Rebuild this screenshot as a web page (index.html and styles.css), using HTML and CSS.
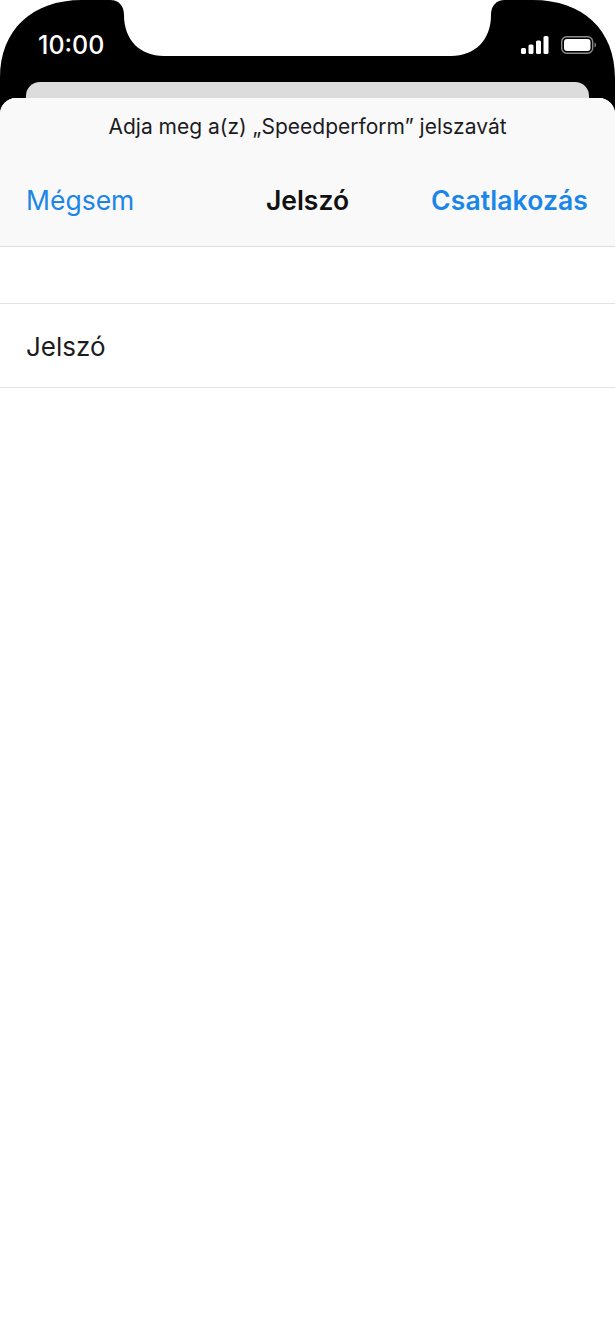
FILE: index.html
```html
<!DOCTYPE html>
<html lang="hu">
  <head>
    <meta charset="UTF-8" />
    <meta name="viewport" content="width=device-width, initial-scale=1.0" />
    <link rel="stylesheet" href="styles.css">
    <title>Jelszó</title>
  </head>
  <body>
    <div class="top">
      <svg class="bezel" width="615" height="112" viewBox="0 0 615 112">
        <path d="M0 112V78C0 30 32 0 82 0H110C119 0 124 6 124 15C124 40 140 56 164 56H451C475 56 491 40 491 15C491 6 496 0 505 0H533C583 0 615 30 615 78V112Z" fill="#000" />
      </svg>
      <div class="status">
        <span class="time">10:00</span>
        <div class="status-icons">
          <svg width="28" height="18" viewBox="0 0 28 18">
            <rect x="0" y="12" width="5" height="6" rx="1.5" fill="#fff" />
            <rect x="7.5" y="8.5" width="5" height="9.5" rx="1.5" fill="#fff" />
            <rect x="15" y="4.5" width="5" height="13.500" rx="1.500" fill="#fff" />
            <rect x="22.500" y="0" width="5" height="18" rx="1.500" fill="#fff" />
          </svg>
          <svg width="35" height="18" viewBox="0 0 35 18">
            <rect x="0.700" y="0.700" width="31" height="16.600" rx="5" fill="none" stroke="#8b8b8b" stroke-width="1.400" />
            <rect x="3" y="3" width="26.500" height="12" rx="3" fill="#fff" />
            <path d="M33.500 6.500C34.500 7 35 8 35 9C35 10 34.500 11 33.500 11.500Z" fill="#8b8b8b" />
          </svg>
        </div>
      </div>
      <div class="peek"></div>
    </div>

    <div class="sheet">
      <header class="sheet-head">
        <p class="prompt">Adja meg a(z) „Speedperform” jelszavát</p>
        <div class="nav">
          <span class="nav-btn">Mégsem</span>
          <span class="nav-title">Jelszó</span>
          <span class="nav-btn nav-btn-bold">Csatlakozás</span>
        </div>
      </header>
      <div class="spacer-row"></div>
      <div class="field-row">Jelszó</div>
    </div>
  </body>
</html>
```

FILE: styles.css
```css
* {
  box-sizing: border-box;
}
body {
  margin: 0;
  height: 1332px;
  overflow: hidden;
  background-color: #fff;
  font-family: Inter, "Liberation Sans", sans-serif;
  color: #1c1c1e;
}

/* black bezel + status bar */
.top {
  position: relative;
  height: 112px;
  overflow: hidden;
}
.bezel {
  position: absolute;
  left: 0;
  top: 0;
}
.status {
  position: relative;
  height: 82px;
  padding: 0 19px 0 38px;
  display: flex;
  justify-content: space-between;
  align-items: flex-start;
}
.time {
  margin-top: 30px;
  font-size: 25px;
  line-height: 30px;
  font-weight: 500;
  color: #fff;
}
.status-icons {
  margin-top: 36px;
  display: flex;
  align-items: center;
  gap: 12px;
}
.peek {
  position: relative;
  height: 40px;
  margin: 0 26px;
  border-radius: 14px 14px 0 0;
  background-color: #dcdcdc;
}

/* the sheet */
.sheet {
  position: relative;
  margin-top: -14px;
  border-radius: 16px 16px 0 0;
  overflow: hidden;
  background-color: #fff;
}
.sheet-head {
  height: 149px;
  background-color: #f9f9fa;
  border-bottom: 1px solid #dedede;
}
.prompt {
  margin: 0;
  padding-top: 17px;
  font-size: 21px;
  line-height: 24px;
  text-align: center;
}
.nav {
  margin-top: 45px;
  padding: 0 27px 0 26px;
  display: flex;
  justify-content: space-between;
  align-items: center;
  position: relative;
}
.nav-btn {
  font-size: 26.500px;
  line-height: 32px;
  color: #1a86e8;
}
.nav-btn-bold {
  font-weight: 600;
  letter-spacing: 0.1px;
}
.nav-title {
  position: absolute;
  left: 0;
  right: 0;
  text-align: center;
  font-size: 26.500px;
  line-height: 32px;
  font-weight: 600;
  color: #111;
}
.spacer-row {
  height: 57px;
  border-bottom: 1px solid #e2e2e2;
}
.field-row {
  height: 84px;
  padding: 2px 0 0 26px;
  display: flex;
  align-items: center;
  font-size: 26px;
  border-bottom: 1px solid #e4e4e4;
}
```
